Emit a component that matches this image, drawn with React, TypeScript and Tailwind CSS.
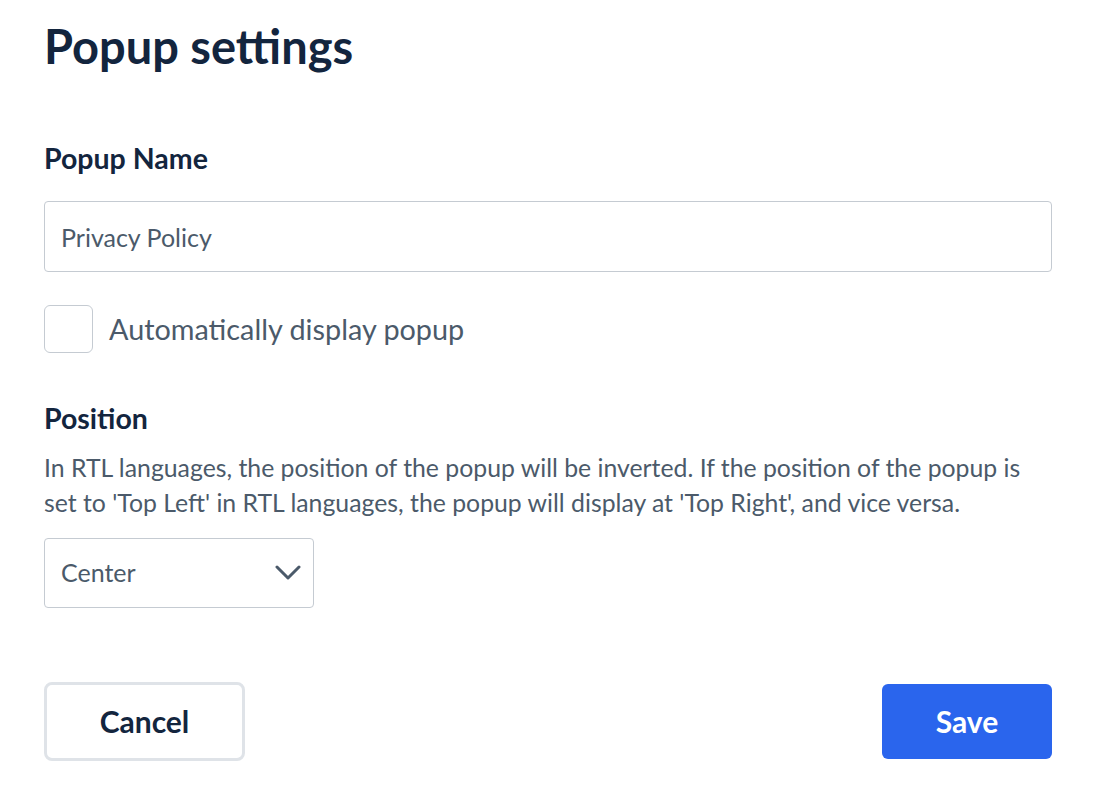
const App = () => {
	return (
		<div className="min-h-screen bg-white px-[44px] pt-[18px] font-['Lato',sans-serif] text-[#13253e]">
			<h1 className="text-[47px] font-bold leading-[57px]">Popup settings</h1>

			<label className="mt-[66px] block text-[28.5px] font-bold leading-[34px]">Popup Name</label>
			<input
				type="text"
				defaultValue="Privacy Policy"
				className="mt-[26px] block h-[71px] w-full rounded-[4px] border border-[#c5cbd2] px-[16px] text-[25px] text-[#4b5a6a] outline-none"
			/>

			<label className="mt-[33px] flex items-center gap-[16px]">
				<span className="block h-[48px] w-[49px] rounded-[6px] border border-[#c5cbd2] bg-white" />
				<span className="text-[28.8px] leading-[35px] text-[#4b5a6a]">Automatically display popup</span>
			</label>

			<h2 className="mt-[48px] text-[28.5px] font-bold leading-[34px]">Position</h2>
			<p className="mt-[15px] text-[24.8px] leading-[35px] text-[#4b5a6a]">
				In RTL languages, the position of the popup will be inverted. If the position of the popup is
				<br />
				set to 'Top Left' in RTL languages, the popup will display at 'Top Right', and vice versa.
			</p>

			<div className="mt-[18px] flex h-[70px] w-[270px] items-center justify-between rounded-[4px] border border-[#c5cbd2] pl-[16px] pr-[12px]">
				<span className="text-[25px] text-[#4b5a6a]">Center</span>
				<svg width="26" height="16" viewBox="0 0 26 16" fill="none">
					<path d="M2 2l11 11L24 2" stroke="#4b5a6a" strokeWidth="3" strokeLinecap="round" strokeLinejoin="round" />
				</svg>
			</div>

			<div className="mt-[74px] flex items-center justify-between">
				<button className="h-[79px] w-[201px] rounded-[8px] border-[3px] border-[#dfe3e8] bg-white text-[30px] font-bold">
					Cancel
				</button>
				<button className="h-[75px] w-[170px] rounded-[6px] bg-[#2a65ed] text-[30px] font-bold text-white">
					Save
				</button>
			</div>
		</div>
	);
};

export default App;
